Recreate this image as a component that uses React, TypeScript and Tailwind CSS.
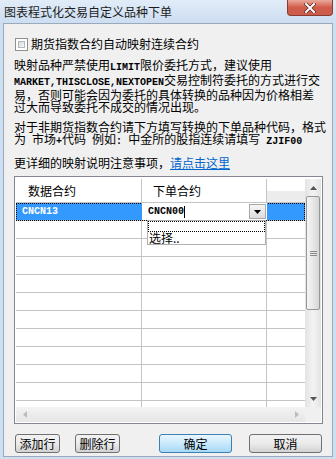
import React from "react";

const cjk = "font-['Noto_Sans_CJK_SC','Liberation_Sans',sans-serif]";

// SimSun-like half width ascii: 6px per char
const M = ({children}: {children: React.ReactNode}) => (
    <span className="font-['Liberation_Mono','DejaVu_Sans_Mono',monospace] text-[10px] font-bold whitespace-pre">{children}</span>
);

const Tri = ({dir, color}: {dir: "up" | "down" | "left" | "right"; color: string}) => {
    if (dir === "up") return <svg width="7" height="4" viewBox="0 0 7 4"><path d="M0 4h7L3.5 0z" fill={color} /></svg>;
    if (dir === "down") return <svg width="7" height="4" viewBox="0 0 7 4"><path d="M0 0h7L3.5 4z" fill={color} /></svg>;
    if (dir === "left") return <svg width="4" height="7" viewBox="0 0 4 7"><path d="M4 0v7L0 3.5z" fill={color} /></svg>;
    return <svg width="4" height="7" viewBox="0 0 4 7"><path d="M0 0v7L4 3.5z" fill={color} /></svg>;
};

function Btn({label, primary, w}: {label: string; primary?: boolean; w: string}) {
    return (
        <button
            className={`${w} h-[19px] rounded-[3px] border text-[12px] leading-[12px] text-black flex items-center justify-center ${
                primary ? "border-[#3c7fb1] bg-linear-to-b from-[#eaf6fd] via-[#c9e9fc] to-[#a7d9f5]" : "border-[#707070] bg-linear-to-b from-[#f2f2f2] via-[#ebebeb] to-[#d2d2d2]"
            }`}
        >
            {label}
        </button>
    );
}

function EmptyRow() {
    return (
        <div className="flex h-[18px] shrink-0 border-b border-[#c4c4c4]">
            <div className="w-[126px] border-r border-[#c4c4c4]" />
            <div className="w-[125px] border-r border-[#c4c4c4]" />
            <div className="flex-1" />
        </div>
    );
}

export default function App() {
    return (
        <div className={`w-[336px] h-[459px] flex flex-col bg-[#cfdff2] text-black ${cjk}`}>
            {/* 타이틀바 */}
            <div className="h-[23px] flex items-start justify-between bg-linear-to-b from-[#e1ecf8] to-[#cddef1]">
                <div className="self-center pl-[4px] text-[12px] leading-[12px] text-[#1b1b1b]">图表程式化交易自定义品种下单</div>
                <div className="mr-[3px] w-[46px] h-[16px] rounded-b-[4px] border border-t-0 border-[#8a3a30] bg-linear-to-b from-[#e9a99b] via-[#d25a4a] to-[#c9604c] flex items-center justify-center">
                    <svg width="12" height="10" viewBox="0 0 12 10">
                        <path d="M2 1l8 8M10 1l-8 8" stroke="#5a2a24" strokeWidth="3.4" strokeLinecap="square" />
                        <path d="M2 1l8 8M10 1l-8 8" stroke="#ffffff" strokeWidth="2" strokeLinecap="square" />
                    </svg>
                </div>
            </div>

            {/* 본문 패널 */}
            <div className="flex-1 ml-[3px] mr-[3px] mb-[2px] border border-[#9aa9bd] bg-[#f0f0f0] pl-[10px] pr-[10px] pt-[12px] flex flex-col text-[12px] leading-[12px]">
                <div className="h-[16px] flex items-center gap-[3px] ml-[1px]">
                    <div className="w-[13px] h-[13px] border border-[#8e8f8f] bg-white p-[2px]">
                        <div className="w-full h-full border border-[#b4b8bd] bg-linear-to-br from-[#d6d8da] to-[#f7f7f7]" />
                    </div>
                    <span>期货指数合约自动映射连续合约</span>
                </div>

                <div className="mt-[7px] whitespace-nowrap">
                    <div>
                        映射品种严禁使用<M>LIMIT</M>限价委托方式，建议使用
                    </div>
                    <div>
                        <M>MARKET,THISCLOSE,NEXTOPEN</M>交易控制符委托的方式进行交
                    </div>
                    <div>易，否则可能会因为委托的具体转换的品种因为价格相差</div>
                    <div>过大而导致委托不成交的情况出现。</div>
                </div>

                <div className="mt-[8px] whitespace-nowrap">
                    <div>对于非期货指数合约请下方填写转换的下单品种代码，格式</div>
                    <div>
                        为<M> </M>市场<M>+</M>代码<M> </M>例如<M>: </M>中金所的股指连续请填写<M> ZJIF00</M>
                    </div>
                </div>

                <div className="mt-[9px] whitespace-nowrap">
                    更详细的映射说明注意事项，<span className="text-[#0066cc] underline">请点击这里</span>
                </div>

                {/* 그리드 */}
                <div className="mt-[7px] w-[309px] h-[248px] border border-[#828790] bg-white pt-[2px] pl-[1px] pr-[1px] pb-[1px] flex">
                    <div className="w-[289px] flex flex-col">
                        <div className="h-[228px] flex flex-col overflow-hidden">
                            <div className="flex h-[24px] shrink-0 border-b border-[#c4c4c4]">
                                <div className="w-[126px] border-r border-[#c4c4c4] flex items-center pl-[12px]">数据合约</div>
                                <div className="w-[125px] border-r border-[#c4c4c4] flex items-center pl-[11px]">下单合约</div>
                                <div className="flex-1 bg-linear-to-b from-white from-50% to-[#ececec] to-50%" />
                            </div>
                            <div className="relative z-10 flex h-[18px] shrink-0 border-b border-[#c4c4c4] outline-1 outline-dotted outline-black -outline-offset-1">
                                <div className="w-[126px] bg-[#3399ff] text-white flex items-center pl-[6px]">
                                    <M>CNCN13</M>
                                </div>
                                <div className="relative w-[125px] bg-white flex items-center pl-[6px]">
                                    <M>CNCN00</M>
                                    <div className="w-px h-[12px] bg-black" />
                                    <div className="ml-auto mr-[1px] w-[17px] h-[15px] border border-[#a9a9a9] bg-linear-to-b from-[#f6f6f6] to-[#dcdcdc] flex items-center justify-center">
                                        <Tri dir="down" color="#000" />
                                    </div>
                                    <div className="absolute left-[5px] top-[17px] w-[119px] h-[25px] border border-[#b0b0b0] bg-white">
                                        <div className="h-[11px] border border-dotted border-black" />
                                        <div className="pl-[1px] leading-[12px]">选择..</div>
                                    </div>
                                </div>
                                <div className="flex-1 bg-[#3399ff]" />
                            </div>
                            {Array.from({length: 11}).map((_, idx) => (
                                <EmptyRow key={idx} />
                            ))}
                        </div>
                        {/* 가로 스크롤 */}
                        <div className="h-[15px] flex bg-linear-to-b from-[#f3f3f3] to-[#e6e6e6]">
                            <div className="w-[17px] flex items-center justify-center">
                                <Tri dir="left" color="#bcbcbc" />
                            </div>
                            <div className="flex-1" />
                            <div className="w-[17px] flex items-center justify-center">
                                <Tri dir="right" color="#bcbcbc" />
                            </div>
                        </div>
                    </div>
                    <div className="w-[16px] flex flex-col">
                        {/* 세로 스크롤 */}
                        <div className="h-[228px] flex flex-col bg-linear-to-r from-[#e3e3e3] via-[#f3f3f3] to-[#e3e3e3]">
                            <div className="h-[17px] flex items-center justify-center">
                                <Tri dir="up" color="#555" />
                            </div>
                            <div className="h-[114px] mx-[1px] rounded-[2px] border border-[#979797] bg-linear-to-r from-[#f5f5f5] via-[#e8e8e8] to-[#d5d5d5] flex flex-col items-center justify-center gap-[1px]">
                                <div className="w-[7px] h-px bg-[#8a8a8a]" />
                                <div className="w-[7px] h-px bg-[#8a8a8a]" />
                                <div className="w-[7px] h-px bg-[#8a8a8a]" />
                            </div>
                            <div className="flex-1" />
                            <div className="h-[17px] flex items-center justify-center">
                                <Tri dir="down" color="#555" />
                            </div>
                        </div>
                        <div className="h-[15px] bg-[#f0f0f0]" />
                    </div>
                </div>

                {/* 버튼 */}
                <div className="mt-[10px] flex">
                    <div className="ml-[1px]">
                        <Btn label="添加行" w="w-[45px]" />
                    </div>
                    <div className="ml-[15px]">
                        <Btn label="删除行" w="w-[45px]" />
                    </div>
                    <div className="ml-[39px]">
                        <Btn label="确定" primary w="w-[73px]" />
                    </div>
                    <div className="ml-[17px]">
                        <Btn label="取消" w="w-[73px]" />
                    </div>
                </div>
            </div>
        </div>
    );
}
